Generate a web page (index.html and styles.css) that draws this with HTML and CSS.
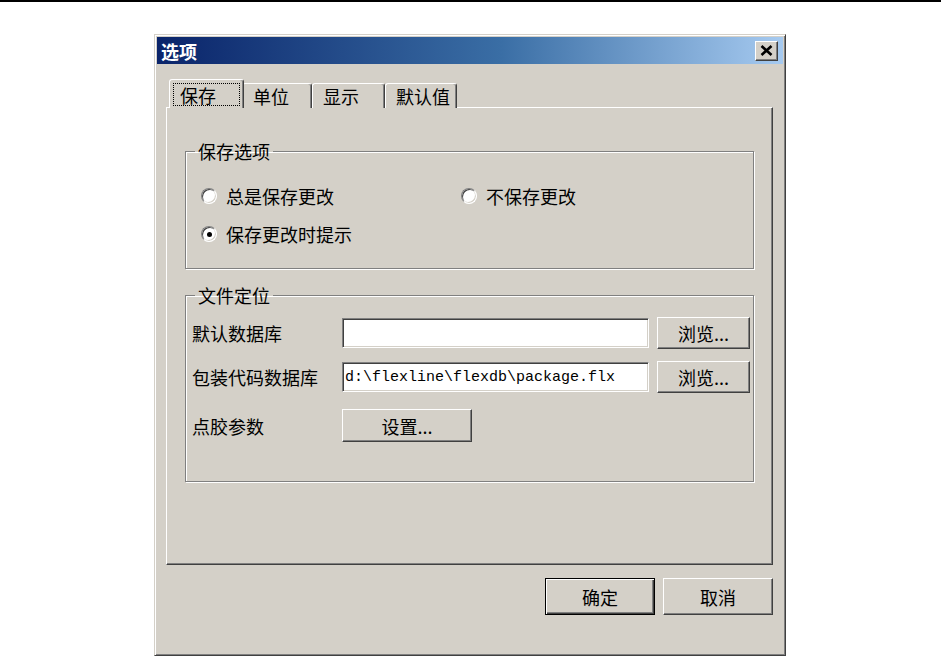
FILE: index.html
```html
<!DOCTYPE html>
<html lang="zh-CN">
<head>
<meta charset="utf-8">
<title>选项</title>
<link rel="stylesheet" href="styles.css">
</head>
<body>
<div class="topline"></div>
<div class="dialog">
  <div class="titlebar">
    <span class="title">选项</span>
    <button class="close" aria-label="关闭">
      <svg width="13" height="11" viewBox="0 0 13 11"><path d="M1.5 1 L11.5 10 M11.5 1 L1.5 10" stroke="#000" stroke-width="2.6" fill="none"/></svg>
    </button>
  </div>
  <div class="content">
    <div class="tabs">
      <div class="tab tab-active"><span class="focus">保存</span></div>
      <div class="tab tab-unit">单位</div>
      <div class="tab tab-show">显示</div>
      <div class="tab tab-default">默认值</div>
    </div>
    <div class="panel">
      <fieldset class="group group-save">
        <legend>保存选项</legend>
        <div class="radios">
          <label class="radio"><span class="dot"></span>总是保存更改</label>
          <label class="radio"><span class="dot"></span>不保存更改</label>
          <label class="radio"><span class="dot dot-checked"></span>保存更改时提示</label>
        </div>
      </fieldset>
      <fieldset class="group group-files">
        <legend>文件定位</legend>
        <div class="rows">
          <div class="row">
            <span class="label">默认数据库</span>
            <input class="field" type="text" value="">
            <button class="btn btn-browse">浏览...</button>
          </div>
          <div class="row">
            <span class="label">包装代码数据库</span>
            <input class="field" type="text" value="d:\flexline\flexdb\package.flx">
            <button class="btn btn-browse">浏览...</button>
          </div>
          <div class="row row-last">
            <span class="label">点胶参数</span>
            <button class="btn btn-setup">设置...</button>
          </div>
        </div>
      </fieldset>
    </div>
    <div class="footer">
      <button class="btn btn-dlg btn-default">确定</button>
      <button class="btn btn-dlg">取消</button>
    </div>
  </div>
</div>
</body>
</html>
```
FILE: styles.css
```css
* { box-sizing: border-box; }

html, body {
  margin: 0;
  padding: 0;
  background: #ffffff;
  overflow: hidden;
}

body {
  font-family: "Noto Sans CJK SC", "Noto Sans", sans-serif;
  font-size: 18px;
  line-height: 20px;
  color: #000;
}

.topline {
  height: 2px;
  background: #000;
}

.dialog {
  margin: 32px 0 0 154px;
  width: 632px;
  height: 622px;
  background: #d4d0c8;
  border: 1px solid;
  border-color: #d4d0c8 #404040 #404040 #d4d0c8;
  box-shadow: inset 1px 1px 0 #ffffff, inset -1px -1px 0 #808080;
  padding: 2px;
  overflow: hidden;
}

.titlebar {
  height: 27px;
  display: flex;
  align-items: center;
  justify-content: space-between;
  padding: 0 5px 0 4px;
  background: linear-gradient(to right, #0a246a 0%, #3a6ea5 55%, #a6caf0 100%);
}

.title {
  color: #fff;
  font-weight: bold;
  font-size: 18px;
  line-height: 20px;
  padding-top: 1px;
}

.close {
  flex: none;
  width: 23px;
  height: 20px;
  padding: 0;
  display: flex;
  align-items: center;
  justify-content: center;
  background: #d4d0c8;
  border: 1px solid;
  border-color: #ffffff #404040 #404040 #ffffff;
  box-shadow: inset -1px -1px 0 #808080;
}

.content {
  padding: 15px 10px 0 9px;
}

.tabs {
  display: flex;
  align-items: flex-end;
  height: 29px;
  padding-left: 3px;
  margin-bottom: -1px;
  position: relative;
  z-index: 1;
}

.tab {
  height: 25px;
  display: flex;
  align-items: center;
  padding-left: 10px;
  background: #d4d0c8;
  border: 1px solid;
  border-bottom: none;
  border-color: #ffffff #404040 transparent #ffffff;
  border-radius: 3px 3px 0 0;
  box-shadow: inset -1px 0 0 #808080;
  white-space: nowrap;
}

.tab-active {
  width: 75px;
  height: 29px;
  padding: 3px 3px 0 3px;
  margin-right: -2px;
  align-items: stretch;
  position: relative;
  z-index: 2;
}

.focus {
  flex: 1;
  height: 23px;
  display: flex;
  align-items: center;
  padding-left: 6px;
  border: 1px dotted #000;
}

.tab-unit { width: 70px; }
.tab-show { width: 73px; }
.tab-default { width: 72px; }

.panel {
  height: 458px;
  padding: 34px 18px 0 18px;
  border: 1px solid;
  border-color: #ffffff #404040 #404040 #ffffff;
  box-shadow: inset -1px -1px 0 #808080;
}

.group {
  margin: 0;
  padding: 0;
  min-width: 0;
  border: 1px solid #808080;
  box-shadow: inset 1px 1px 0 #ffffff, 1px 1px 0 #ffffff;
}

.group legend {
  margin-left: 9px;
  padding: 0 3px;
  font-size: 18px;
  line-height: 18px;
}

.group-files {
  margin-top: 17px;
}

.radios {
  display: grid;
  grid-template-columns: 260px auto;
  row-gap: 18px;
  padding: 26px 0 24px 15px;
}

.radio {
  display: flex;
  align-items: center;
  gap: 9px;
  height: 20px;
}

.dot {
  flex: none;
  width: 16px;
  height: 16px;
  border-radius: 50%;
  background: #fff;
  border: 1px solid;
  border-color: #808080 #ffffff #ffffff #808080;
  box-shadow: inset 1px 1px 0 #404040, inset -1px -1px 0 #d4d0c8;
  display: flex;
  align-items: center;
  justify-content: center;
}

.dot-checked::after {
  content: "";
  width: 5px;
  height: 5px;
  border-radius: 50%;
  background: #000;
}

.rows {
  display: flex;
  flex-direction: column;
  gap: 12px;
  padding: 13px 0 39px 6px;
}

.row {
  display: flex;
  align-items: center;
  height: 32px;
}

.row-last {
  margin-top: 4px;
  height: 33px;
}

.label {
  width: 150px;
  flex: none;
}

.field {
  width: 307px;
  height: 30px;
  margin: 0 8px 0 0;
  padding: 0 2px;
  background: #fff;
  border: 1px solid;
  border-color: #808080 #ffffff #ffffff #808080;
  box-shadow: inset 1px 1px 0 #404040, inset -1px -1px 0 #d4d0c8;
  font-family: "Liberation Mono", "DejaVu Sans Mono", monospace;
  font-size: 15px;
  color: #000;
  outline: none;
}

.btn {
  background: #d4d0c8;
  border: 1px solid;
  border-color: #ffffff #404040 #404040 #ffffff;
  box-shadow: inset -1px -1px 0 #808080;
  font-family: "Noto Sans CJK SC", "Noto Sans", sans-serif;
  font-size: 18px;
  line-height: 20px;
  color: #000;
  padding: 0;
}

.btn-browse {
  width: 93px;
  height: 32px;
}

.btn-setup {
  width: 130px;
  height: 33px;
}

.footer {
  display: flex;
  justify-content: flex-end;
  gap: 8px;
  margin-top: 13px;
}

.btn-dlg {
  width: 110px;
  height: 37px;
}

.btn-default {
  border-color: #000;
  box-shadow: inset 1px 1px 0 #ffffff, inset -1px -1px 0 #404040, inset -2px -2px 0 #808080;
}
```
